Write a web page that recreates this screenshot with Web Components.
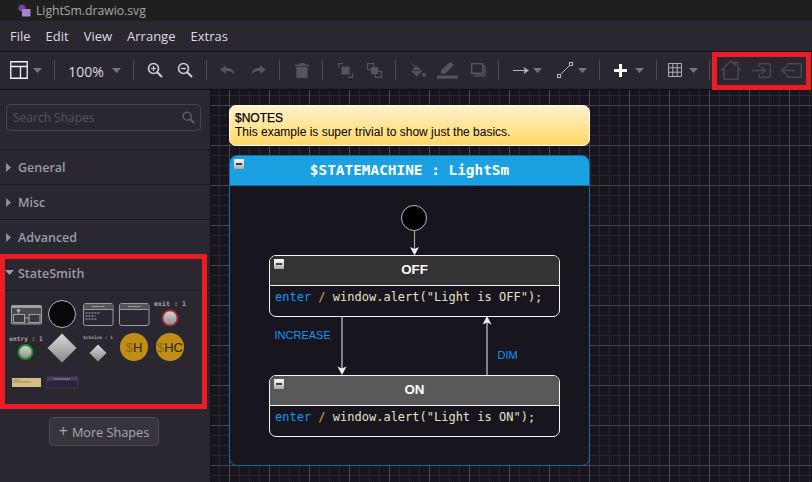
<!DOCTYPE html>
<html><head><meta charset="utf-8">
<style>
html,body{margin:0;padding:0;width:812px;height:482px;overflow:hidden;background:#2a2731;font-family:"Open Sans","Liberation Sans",sans-serif}
</style></head>
<body>
<app-shell>
  <title-bar>LightSm.drawio.svg</title-bar>
  <menu-bar><span>File</span><span>Edit</span><span>View</span><span>Arrange</span><span>Extras</span></menu-bar>
  <tool-bar></tool-bar>
  <shape-sidebar slot="side">
  </shape-sidebar>
  <diagram-canvas slot="main">
    <note-shape style="left:18px;top:15px"><b>$NOTES</b><br>This example is super trivial to show just the basics.</note-shape>
    <state-machine style="left:18px;top:65px">$STATEMACHINE : LightSm</state-machine>
    <state-box style="left:58px;top:165px" name="OFF" fill="#333333">window.alert("Light is OFF");</state-box>
    <state-box style="left:58px;top:285px" name="ON" fill="#595959">window.alert("Light is ON");</state-box>
    <diagram-edges></diagram-edges>
  </diagram-canvas>
</app-shell>
<script>
const def=(n,html,extra)=>customElements.define(n,class extends HTMLElement{
  constructor(){super();this.attachShadow({mode:'open'}).innerHTML=typeof html==='function'?html(this):html;}
  connectedCallback(){extra&&extra(this)}
});
def('app-shell',`<style>
:host{display:grid;width:812px;height:482px;grid-template-columns:211px 601px;grid-template-rows:21px 31px 38px 392px;overflow:hidden;position:relative}
::slotted(title-bar),::slotted(menu-bar),::slotted(tool-bar){grid-column:1/3}
.frame{position:absolute;box-sizing:border-box;border:5px solid #ed1c24;pointer-events:none}
</style><slot></slot><slot name="side"></slot><slot name="main"></slot>
<div class="frame" style="left:712px;top:52px;width:99px;height:38px"></div>
<div class="frame" style="left:0;top:254px;width:207px;height:155px"></div>`);
def('title-bar',`<style>
:host{display:flex;align-items:center;background:#1f1f1f;color:#a8a8a8;font:12.2px "Open Sans","Liberation Sans",sans-serif;padding-left:18px;box-sizing:border-box;height:21px;gap:5px}
svg{display:block}
</style><svg width="13" height="13" viewBox="0 0 13 13"><circle cx="4" cy="4" r="3.6" fill="#6a4a96"/><rect x="4" y="5" width="8.6" height="7.6" rx=".8" fill="#a382d8"/></svg><slot></slot>`);
def('menu-bar',`<style>
:host{display:flex;align-items:center;background:#2a2731;color:#dcdce0;font:13px "Open Sans","Liberation Sans",sans-serif;height:31px;padding:0 0 1px 10px;box-sizing:border-box;border-bottom:1px solid #0e0d10;gap:15px}
</style><slot></slot>`);
const D='#57555b',L='#cfcfd1',M='#bdbdc0';
const caret=`<svg width="9" height="5" viewBox="0 0 9 5"><path d="M0 0h9L4.5 5z" fill="#77757c"/></svg>`;
const icons={
 layout:`<svg width="18" height="18" viewBox="0 0 18 18"><path d="M.75.75h16.5v16.5H.75zM.75 5.5h16.5M10.5 5.5v11.75" fill="none" stroke="#f2f2f2" stroke-width="1.3"/></svg>`,
 zin:`<svg width="16" height="16" viewBox="0 0 16 16"><circle cx="6.5" cy="6.5" r="5" fill="none" stroke="${L}" stroke-width="1.6"/><path d="M10.2 10.2 15 15" stroke="${L}" stroke-width="2"/><path d="M4 6.5h5M6.5 4v5" stroke="${L}" stroke-width="1.2"/></svg>`,
 zout:`<svg width="16" height="16" viewBox="0 0 16 16"><circle cx="6.5" cy="6.5" r="5" fill="none" stroke="${L}" stroke-width="1.6"/><path d="M10.2 10.2 15 15" stroke="${L}" stroke-width="2"/><path d="M4 6.5h5" stroke="${L}" stroke-width="1.3"/></svg>`,
 undo:`<svg width="16" height="10" viewBox="0 0 15 9"><path d="M5.5 0 0 4.2 5.5 8V5.4c3.5-.2 6 .6 8 3.4 0-4-3-6.6-8-6.5z" fill="${D}"/></svg>`,
 redo:`<svg width="16" height="10" viewBox="0 0 15 9"><path d="M9.5 0 15 4.2 9.5 8V5.4c-3.5-.2-6 .6-8 3.4 0-4 3-6.6 8-6.5z" fill="${D}"/></svg>`,
 del:`<svg width="14" height="15" viewBox="0 0 14 15"><path d="M0 1.6h14v1.6H0zM4.5 0h5v1.6h-5zM1.4 4H12.6v11H1.4z" fill="${D}"/></svg>`,
 front:`<svg width="15" height="15" viewBox="0 0 15 15"><path d="M5 .6H.6V5M10 14.4h4.4V10" fill="none" stroke="${D}" stroke-width="1.2"/><path d="M3.5 3.5h8v8h-8z" fill="${D}"/></svg>`,
 back:`<svg width="15" height="15" viewBox="0 0 15 15"><rect x=".6" y=".6" width="6" height="6" fill="none" stroke="${D}" stroke-width="1.2"/><rect x="8.4" y="8.4" width="6" height="6" fill="none" stroke="${D}" stroke-width="1.2"/><rect x="4" y="4" width="7" height="7" fill="${D}"/></svg>`,
 fill:`<svg width="16" height="15" viewBox="0 0 16 15"><path d="M1 0 7 6" stroke="${D}" stroke-width="1"/><path d="M6 2.5 12 8l-5 5.5-5.5-5.3z" fill="${D}"/><path d="M3 7.5h6.5" stroke="#2a2731" stroke-width="1"/><circle cx="14" cy="12" r="1.9" fill="${D}"/></svg>`,
 line:`<svg width="21" height="18" viewBox="0 0 21 18"><path d="M4 9 13.5 .8l3.4 3.3-8.8 8.6H4z" fill="${D}"/><rect y="14.6" width="21" height="3" fill="${D}"/></svg>`,
 shadow:`<svg width="15" height="14" viewBox="0 0 15 14"><rect x="2.5" y="2.5" width="12.5" height="11.5" fill="#464449"/><rect x=".7" y=".7" width="11" height="9.6" fill="#2a2731" stroke="${D}" stroke-width="1.4"/></svg>`,
 arrow:`<svg width="16" height="7" viewBox="0 0 16 7"><path d="M0 3.5h13" stroke="#b9b9bc" stroke-width="1"/><path d="M10.5 0 16 3.5 10.5 7l1.4-3.5z" fill="#b9b9bc"/></svg>`,
 wp:`<svg width="16" height="16" viewBox="0 0 16 16"><path d="M3 13 13 3" stroke="#b9b9bc" stroke-width="1"/><rect x=".5" y="12.5" width="3" height="3" fill="#2a2731" stroke="#b9b9bc"/><rect x="12.5" y=".5" width="3" height="3" fill="#2a2731" stroke="#b9b9bc"/></svg>`,
 plus:`<svg width="13" height="13" viewBox="0 0 13 13"><path d="M5 0h3v5h5v3H8v5H5V8H0V5h5z" fill="#fff"/></svg>`,
 table:`<svg width="14" height="14" viewBox="0 0 14 14"><path d="M.5.5h13v13H.5zM.5 4.8h13M.5 9.2h13M4.8.5v13M9.2.5v13" fill="none" stroke="#b0b0b3" stroke-width="1"/></svg>`,
 home:`<svg width="22" height="20" viewBox="0 0 22 20"><path d="M1 10.5 11 1l4 3.8V2.2h2.5v5L21 10.5M4 9v9.6a.8.8 0 0 0 .8.8h12.4a.8.8 0 0 0 .8-.8V9" fill="none" stroke="#4b4950" stroke-width="1.5"/></svg>`,
 inn:`<svg width="19" height="15" viewBox="0 0 19 15"><path d="M7 .7h10.2a1 1 0 0 1 1 1v11.6a1 1 0 0 1-1 1H7M7 4V.7M7 11v3.3" fill="none" stroke="#4b4950" stroke-width="1.4"/><path d="M0 7.5h13M9 3.7l4.2 3.8L9 11.3" fill="none" stroke="#4b4950" stroke-width="1.4"/></svg>`,
 out:`<svg width="21" height="15" viewBox="0 0 21 15"><path d="M6 3.8V1.7a1 1 0 0 1 1-1h12.3a1 1 0 0 1 1 1v11.6a1 1 0 0 1-1 1H7a1 1 0 0 1-1-1v-2.1" fill="none" stroke="#4b4950" stroke-width="1.4"/><path d="M14 7.5H1M5 3.7.8 7.5 5 11.3" fill="none" stroke="#4b4950" stroke-width="1.4"/></svg>`
};
const tools=[['layout',18.5],['c',37],['s',54],['t100',86],['c',116],['s',133],['zin',155],['zout',185],['s',206],['undo',228],['redo',258],['s',279],['del',302],['s',322],['front',345],['back',374],['s',395],['fill',418],['line',447],['shadow',478],['s',498.5],['arrow',520.5],['c',537],['wp',564.5],['c',582],['s',599],['plus',620],['c',639],['s',656.5],['table',675],['c',693.5],['s',709.5],['home',731],['inn',761],['out',791]];
def('tool-bar',()=>{
 let prev=0,h='';
 for(const [k,c] of tools){
  const w=k==='s'?1:k==='t100'?40:k==='c'?9:k==='line'?21:k==='home'?22:k==='out'?21:k==='layout'?18:k==='inn'?19:16;
  const left=c-w/2, ml=left-prev; prev=left+w;
  const st=`margin-left:${ml}px;width:${w}px`;
  h+=k==='s'?`<i class="sep" style="${st}"></i>`:k==='t100'?`<span class="t" style="${st}">100%</span>`:`<span class="ic" style="${st}">${k==='c'?caret:icons[k]}</span>`;
 }
 return `<style>
:host{display:flex;align-items:center;height:38px;background:#2a2731;color:#dcdce0;font:14px "Open Sans","Liberation Sans",sans-serif;box-sizing:border-box;border-bottom:1px solid #0e0d10;padding-bottom:1px}
.sep{display:block;height:20px;background:#4e4c53;flex:none}
.ic{display:flex;align-items:center;justify-content:center;flex:none}
.t{flex:none;text-align:center;font-size:14px;padding-top:2px}
svg{display:block;flex:none}
</style>${h}`;
});
def('shape-section',(e)=>`<style>
:host{display:flex;align-items:center;height:35px;box-sizing:border-box;border-top:1px solid #1c1a20;color:#9b9ba3;font:600 12.5px "Open Sans","Liberation Sans",sans-serif;padding-left:18px;position:relative}
svg{position:absolute;left:6px;top:13px}
</style>${e.hasAttribute('open')?'<svg style="left:5px;top:15px" width="9" height="5" viewBox="0 0 9 5"><path d="M0 0h9L4.5 5z" fill="#9b9ba3"/></svg>':'<svg width="5" height="9" viewBox="0 0 5 9"><path d="M0 0l5 4.5L0 9z" fill="#8f8f96"/></svg>'}<slot></slot>`);
def('search-box',`<style>
:host{display:flex;align-items:center;justify-content:space-between;margin:14px 9px 18px 6px;height:27px;box-sizing:border-box;border:1px solid #47454c;border-radius:4px;padding:0 5px 0 6px;color:#56545b;font:12px "Open Sans","Liberation Sans",sans-serif}
svg{display:block}
</style><slot></slot><svg width="13" height="13" viewBox="0 0 13 13"><circle cx="5.2" cy="5.2" r="4" fill="none" stroke="#5f5d64" stroke-width="1.5"/><path d="M8.2 8.2 12.3 12.3" stroke="#5f5d64" stroke-width="2"/></svg>`);
def('shape-palette',`<style>
:host{display:block;height:115px;border-top:1px solid #1c1a20;border-bottom:1px solid #1c1a20}
svg{display:block}
text{font-family:"DejaVu Sans Mono",monospace}
</style><svg width="210" height="115" viewBox="0 291 210 115">
<defs><linearGradient id="g" x1="0" y1="0" x2="0" y2="1"><stop offset="0" stop-color="#d8d8d8"/><stop offset="1" stop-color="#8a8a8a"/></linearGradient></defs>
<g fill="none" stroke="#a2a2a6">
 <rect x="11.5" y="305.5" width="30" height="18.5" rx="1" fill="#4a484e"/>
 <rect x="11.5" y="305.5" width="30" height="2.5" fill="#a0a0a4" stroke="none"/>
 <rect x="13.5" y="314.5" width="11" height="8" fill="#3a393d"/><rect x="29" y="314.5" width="11" height="8" fill="#3a393d"/>
 <circle cx="18.5" cy="310.5" r="1.4" fill="#b0b0b0"/><path d="M18.5 312v3M24.5 318h4.5"/>
</g>
<circle cx="62" cy="314" r="13.5" fill="#08080a" stroke="#b5b5b8" stroke-width="1"/>
<g stroke="#9c9ca0" fill="#2a2731"><rect x="83.5" y="303.5" width="29.5" height="22" rx="2"/><path d="M84 304h29v5H84z" fill="#555458" stroke="none"/><path d="M84 309.5h29"/>
<rect x="119.5" y="303.5" width="29.5" height="22" rx="2"/><path d="M120 304h29v5h-29z" fill="#555458" stroke="none"/><path d="M120 309.5h29"/></g>
<path d="M85.5 313h14M85.5 316h10M85.5 319h11" stroke="#b4b4b7" stroke-width="1.2" stroke-dasharray="2 1"/>
<path d="M92 306.5h13M128 306.5h13" stroke="#b0b0b0" stroke-dasharray="1.5 .6"/>
<text x="170" y="305.5" text-anchor="middle" font-size="6.6" font-weight="700" fill="#a9a9ac">exit : 1</text>
<circle cx="170" cy="318" r="7.6" fill="url(#g)" stroke="#9e2a33" stroke-width="1.8"/>
<text x="26" y="340.5" text-anchor="middle" font-size="6.2" font-weight="700" fill="#a9a9ac">entry : 1</text>
<circle cx="25.5" cy="352" r="7" fill="url(#g)" stroke="#1f8f2d" stroke-width="1.8"/>
<path d="M62 333.5 76.5 348 62 362.5 47.5 348z" fill="url(#g)"/>
<text x="98" y="339" text-anchor="middle" font-size="4.5" font-weight="700" fill="#a0a0a4">$choice : 1</text>
<path d="M98 344.5 106.5 353 98 361.5 89.5 353z" fill="url(#g)"/>
<circle cx="134" cy="347" r="14" fill="#c28d17"/>
<text x="134" y="352" text-anchor="middle" font-size="13" style="font-family:'Liberation Sans'" fill="#2a2408"><tspan fill="#8a6a10">$</tspan>H</text>
<circle cx="170" cy="347" r="14" fill="#c28d17"/>
<text x="170" y="352" text-anchor="middle" font-size="13" style="font-family:'Liberation Sans'" fill="#2a2408"><tspan fill="#8a6a10">$</tspan>HC</text>
<rect x="12" y="378" width="29" height="9" fill="#d5bf82"/><path d="M13 380h7M13 382h18" stroke="#8b7c54" stroke-width=".8"/>
<rect x="47" y="377" width="31" height="11" rx="1" fill="#2d2438" stroke="#3f3350"/><rect x="47" y="377" width="31" height="3.6" fill="#4c3b66"/><path d="M54 379h16" stroke="#a9a3b3" stroke-dasharray="1.5 .6"/>
</svg>`);
def('more-button',`<style>
:host{display:inline-flex;align-items:center;justify-content:center;box-sizing:border-box;width:110px;height:29px;border:1px solid #4e4c53;border-radius:4px;background:#37343d;color:#a9a9ae;font:12.7px "Open Sans","Liberation Sans",sans-serif;gap:4px}
b{font-size:16px;font-weight:400;line-height:1;margin-top:-2px}
</style><b>+</b><slot></slot>`);
def('shape-sidebar',`<style>
:host{display:block;background:#2a2731;border-right:1px solid #141216;box-sizing:border-box;width:211px;height:392px;overflow:hidden}
.more{display:flex;padding:10px 0 0 49px}
</style><search-box>Search Shapes</search-box>
<shape-section>General</shape-section><shape-section>Misc</shape-section><shape-section>Advanced</shape-section>
<shape-section open style="height:36px;padding-top:2px">StateSmith</shape-section>
<shape-palette></shape-palette>
<div class="more"><more-button>More Shapes</more-button></div>`);
def('diagram-canvas',`<style>
:host{display:block;position:relative;width:601px;height:392px;overflow:hidden;background-color:#18151e;
background-image:linear-gradient(#4a484f 1px,transparent 1px),linear-gradient(90deg,#4a484f 1px,transparent 1px),linear-gradient(#2a2730 1px,transparent 1px),linear-gradient(90deg,#2a2730 1px,transparent 1px);
background-size:40px 40px,40px 40px,10px 10px,10px 10px;background-position:0 15px,18px 0,0 5px,8px 0}
</style><slot></slot>`);
const collapse=`<svg class="col" width="10" height="10" viewBox="0 0 10 10"><defs><linearGradient id="c" x1="0" y1="0" x2="0" y2="1"><stop offset="0" stop-color="#fff"/><stop offset="1" stop-color="#a9a9a9"/></linearGradient></defs><rect width="10" height="10" rx="1" fill="url(#c)"/><path d="M2 5h6" stroke="#111" stroke-width="1.6"/></svg>`;
def('note-shape',`<style>
:host{position:absolute;display:block;box-sizing:border-box;width:361px;height:41px;border:1px solid #fff;border-radius:7px;background:linear-gradient(#fff2cc,#ffd966);color:#000;font:12px/14px "Liberation Sans",sans-serif;padding:5px 0 0 5px}
::slotted(b){font-weight:400;-webkit-text-stroke:.25px #000}
</style><slot></slot>`);
def('state-machine',`<style>
:host{position:absolute;display:block;box-sizing:border-box;width:361px;height:311px;border:1px solid #0f6ea6;border-radius:8px;background:#18151e;overflow:hidden}
.h{height:29px;background:#1ba1e2;border-bottom:1px solid #0f6ea6;color:#fff;font:700 14.4px/29px "DejaVu Sans Mono",monospace;text-align:center;margin:-1px -1px 0;padding-top:1px;box-sizing:content-box}
.col{position:absolute;left:4px;top:3px}
</style><div class="h"><slot></slot></div>${collapse}`);
def('state-box',(e)=>`<style>
:host{position:absolute;display:block;box-sizing:border-box;width:291px;height:62px;border:1px solid #f4f4f4;border-radius:7px;background:#18151e;overflow:hidden}
.h{height:29px;box-sizing:content-box;background:${e.getAttribute('fill')};border-bottom:1px solid #f4f4f4;color:#fff;font:700 13.3px/27px "Liberation Sans",sans-serif;text-align:center}
.b{font:12px/23px "DejaVu Sans Mono",monospace;padding-left:5px;color:#e3e3c6;white-space:pre}
.k{color:#0c98f5}.s{color:#d9a441}
.col{position:absolute;left:4px;top:3px}
</style><div class="h">${e.getAttribute('name')}</div><div class="b"><span class="k">enter</span> <span class="s">/</span> <slot></slot></div>${collapse}`);
def('diagram-edges',`<style>
:host{position:absolute;inset:0;display:block;pointer-events:none}
svg{position:absolute;left:0;top:0}
text{font:11px "Liberation Sans",sans-serif;fill:#0c98f5}
</style><svg width="601" height="392" viewBox="211 90 601 392">
<circle cx="414" cy="218" r="12.5" fill="#000" stroke="#b9b9bc" stroke-width="1"/>
<path d="M414.5 231v20" stroke="#a4a3a8" stroke-width="1.2"/><path d="M410 247l4.5 8.5 4.5-8.5-4.5 2z" fill="#eee"/>
<path d="M342 316.5v53" stroke="#9e9da2" stroke-width="1.6"/><path d="M337.5 366.5l4.5 8.5 4.5-8.5-4.5 2z" fill="#eee"/>
<path d="M487 375v-53" stroke="#9e9da2" stroke-width="1.6"/><path d="M482.5 324.5l4.5-8.5 4.5 8.5-4.5-2z" fill="#eee"/>
<text x="274.5" y="339">INCREASE</text><text x="497.5" y="359">DIM</text>
</svg>`);
</script>
</body></html>
